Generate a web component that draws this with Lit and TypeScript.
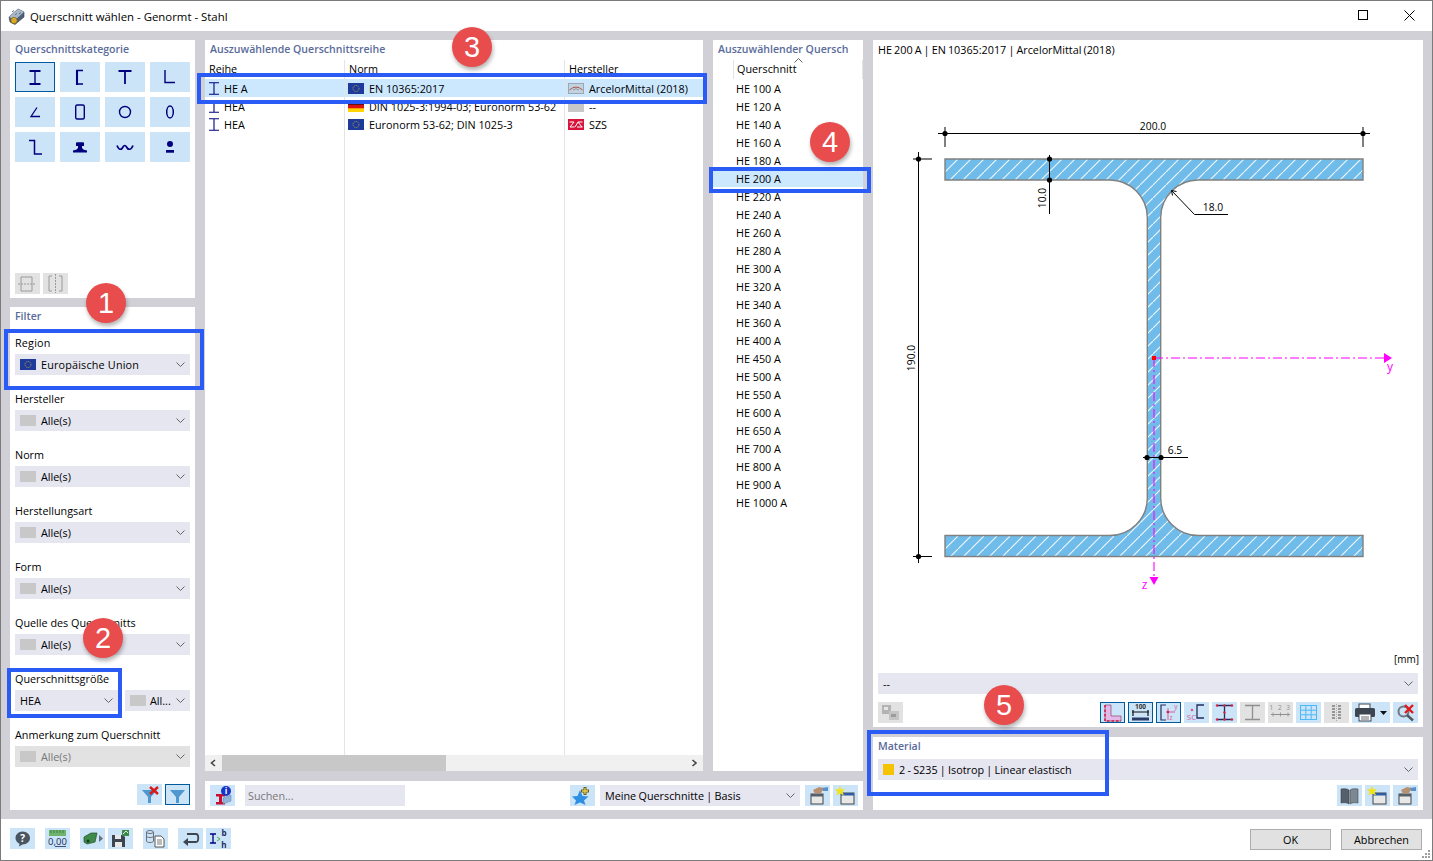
import { LitElement, html, css, svg } from "lit";
import { customElement } from "lit/decorators.js";

const NAVY = "#00007f";
const eu = svg`<rect width="16" height="11" fill="#1e3a9a"/><g fill="none" stroke="#b9a545" stroke-width="1" stroke-dasharray="1 1"><circle cx="8" cy="5.5" r="3"/></g>`;
const de = svg`<rect width="16" height="11" fill="#ffd400"/><rect width="16" height="7.3" fill="#dd1111"/><rect width="16" height="3.6" fill="#111"/>`;
const none = svg`<rect width="16" height="11" fill="#c8c8c8"/>`;
const am = svg`<rect x=".5" y=".5" width="15" height="10" fill="#c3d2e0" stroke="#9aa7b5"/><path d="M1.5 7 Q8 1 14.5 7" fill="none" stroke="#a8564a" stroke-width="1"/><path d="M5 7 Q8 4.5 11 7" fill="none" stroke="#888" stroke-width=".8"/>`;
const szs = svg`<rect width="16" height="11" fill="#d8143a"/><path d="M1.5 3 H6 L2 8 H6.5 M7 8 L10 3 M9 8 H14.5 M14.5 3 H10 L14 8" fill="none" stroke="#fff" stroke-width="1"/>`;
const flag = (c: unknown) => html`<svg class="flag" viewBox="0 0 16 11">${c}</svg>`;

const catIcons = [
  svg`<path d="M14.5 9H25.5M14.5 22H25.5" stroke-width="1.8"/><path d="M20 9V22" stroke-width="1.4"/>`,
  svg`<path d="M23 8.5H17V22H23" stroke-width="1.5"/><path d="M17 8V23" stroke-width="2.1"/>`,
  svg`<path d="M13.5 9H26.5" stroke-width="2"/><path d="M20 9V22" stroke-width="1.8"/>`,
  svg`<path d="M15 8V20.5H25" stroke-width="1.4"/>`,
  svg`<path d="M22 10.5L16 19.5H25" stroke-width="1.3"/>`,
  svg`<rect x="15.7" y="8" width="8.6" height="14" rx="1.5" stroke-width="1.4"/>`,
  svg`<circle cx="20" cy="15" r="5.5" stroke-width="1.4"/>`,
  svg`<ellipse cx="20" cy="15" rx="3.3" ry="6" stroke-width="1.5"/>`,
  svg`<path d="M14 8.5H19.5V22H27" stroke-width="1.5"/>`,
  svg`<path d="M16 10.5C18 10 22 10 24 10.5V14H22V15.5C22 17 24 18 27 18.5V20.5H13V18.5C16 18 18 17 18 15.5V14H16Z" fill="${NAVY}" stroke="none"/>`,
  svg`<path d="M12 13.5C14 18.5 16.5 18 18 15C19 13 20.5 13 21.5 15C23 18 26 18.5 28 13.5" stroke-width="1.7"/>`,
  svg`<circle cx="20" cy="12" r="3" fill="${NAVY}" stroke="none"/><rect x="16" y="18" width="8" height="2.7" fill="${NAVY}" stroke="none"/>`,
];

const ic = (c: unknown, cls = "") => html`<span class="tb ${cls}"><svg viewBox="0 0 25 21">${c}</svg></span>`;
const gl = "#8f8f8f";
const icons = {
  mirrorY: svg`<g fill="none" stroke="#9a9a9a"><path d="M6 4H17V18H6Z"/><path d="M3 11H20" stroke-dasharray="2 1"/></g>`,
  mirrorZ: svg`<g fill="none" stroke="#9a9a9a"><path d="M9 3H6V18H9M16 3H19V18H16"/><path d="M12.5 1V20" stroke-dasharray="2 1"/></g>`,
  filterX: svg`<path d="M5 6H20L14 13V19H11V13Z" fill="#4f97cf"/><path d="M13 3L21 10M21 3L13 10" stroke="#d81a1a" stroke-width="2.4"/>`,
  filter: svg`<path d="M5 6H20L14 13V19H11V13Z" fill="#4f97cf"/>`,
  help: svg`<path d="M12.5 3.5C17 3.5 20 6.5 20 10C20 13.5 17 16.5 12.5 16.5L9 18.5L9.5 15.7C7 14.5 5.5 12.5 5.5 10C5.5 6.5 8.5 3.5 12.5 3.5Z" fill="#4a5560"/><text x="12.6" y="14" text-anchor="middle" class="svt" font-size="10" font-weight="700" fill="#fff">?</text>`,
  zero: svg`<rect x="4" y="2" width="17" height="6" fill="#6fb36f"/><path d="M6 2V5M9 2V5M12 2V5M15 2V5M18 2V5" stroke="#2c6e2c" stroke-width=".7"/><text x="12.5" y="16.5" text-anchor="middle" class="svt" font-size="9.5" fill="#1a2b5c">0,00</text><path d="M10 18.5H21" stroke="#1a2b5c" stroke-width=".8"/>`,
  green: svg`<path d="M4 9L11 5H17L15 14L7 16L4 14Z" fill="#3d8a4a" stroke="#1f4d2a" stroke-width=".7"/><circle cx="8" cy="13" r="1.5" fill="#173a20"/><path d="M19 7L23 10.5L19 14Z" fill="#6a7078"/>`,
  save: svg`<path d="M4 7H15L17 9V19H4Z" fill="#3d4650"/><rect x="7" y="7" width="6" height="4" fill="#e8e8e8"/><rect x="7" y="14" width="7" height="5" fill="#e8e8e8"/><path d="M14 2H21V8H14Z" fill="#3d8a4a"/><path d="M15 6L18 3L20 5" stroke="#d8f0d8" fill="none"/>`,
  dbdoc: svg`<ellipse cx="7" cy="4" rx="3.5" ry="1.5" fill="none" stroke="#6a7078"/><path d="M3.5 4V13C3.5 15 10.5 15 10.5 13V4M3.5 8C3.5 10 10.5 10 10.5 8" fill="none" stroke="#6a7078"/><path d="M12 8H18L21 11V19H12Z" fill="#fff" stroke="#555"/><path d="M14 12H19M14 14H19M14 16H19" stroke="#555" stroke-width=".8"/>`,
  ret: svg`<path d="M9 6H18C21 6 21 14 18 14H7" fill="none" stroke="#3d4650" stroke-width="1.8"/><path d="M10 10L5 14L10 18Z" fill="#3d4650"/>`,
  ibh: svg`<path d="M4 6H10M4 15H10M7 6V15" stroke="#00007f" stroke-width="1.3" fill="none"/><path d="M11 9L14 11L11 13" stroke="#4fae4f" fill="none"/><text x="18" y="8" text-anchor="middle" class="svt" font-size="8" font-weight="700" fill="#1a2b5c">b</text><text x="18" y="19.5" text-anchor="middle" class="svt" font-size="8" font-weight="700" fill="#1a2b5c">h</text>`,
  info: svg`<path d="M6 9H15V11.5H12V17H15V19.5H6V17H9V11.5H6Z" fill="#c8102e"/><path d="M13 13L21 10V16L13 19Z" fill="#8fb3d9" stroke="#5c7fa8" stroke-width=".5"/><circle cx="16" cy="6" r="5" fill="#1733c8"/><text x="16" y="9" text-anchor="middle" class="svt" font-size="8.5" font-weight="700" fill="#fff">i</text>`,
  star: svg`<path d="M10 5L12.5 11L18.5 11.5L14 15.5L15.5 20L10 17.5L4.5 20L6 15.5L2 11.5L7.5 11Z" fill="#2f8fe3"/><path d="M15 2V10M11 6H19" stroke="#6b5a10" stroke-width="3"/><path d="M15 3V9M12 6H18" stroke="#e6cf5a" stroke-width="1.3"/>`,
  hand: svg`<rect x="6" y="9" width="12" height="10" fill="#e8e8e8" stroke="#444"/><rect x="6" y="9" width="12" height="2.5" fill="#55606c"/><path d="M8 5L14 2L19 3L16 8L10 9Z" fill="#b98f72"/><path d="M17 3L23 2V6L18 6Z" fill="#5b8fc7"/>`,
  newWin: svg`<rect x="8" y="8" width="13" height="11" fill="#e8e8e8" stroke="#444"/><rect x="8" y="8" width="13" height="2.5" fill="#2d5ca8"/><path d="M7 1L8.5 4.5L12 4L9.5 7L11 10.5L7 8.5L3.5 10.5L4.5 7L2 4L5.5 4.5Z" fill="#f2e31c"/>`,
  book: svg`<path d="M12 5C10 3.5 7 3.5 4 4V18C7 17.5 10 17.5 12 19Z" fill="#55606c" stroke="#333" stroke-width=".5"/><path d="M13 5C15 3.5 18 3.5 21 4V18C18 17.5 15 17.5 13 19Z" fill="#7d8893" stroke="#333" stroke-width=".5"/>`,
  gears: svg`<g opacity=".65"><rect x="4" y="3" width="9" height="9" fill="#9a9a9a"/><rect x="11" y="9" width="10" height="9" fill="#b5b5b5"/><rect x="6" y="5" width="4" height="3" fill="#e8e8e8"/><rect x="13" y="12" width="5" height="3" fill="#777"/></g>`,
  lsec: svg`<path d="M5 3H11V14H21V19H5Z" fill="#e6b8e8" stroke="#7a2b5a" stroke-width=".6"/><path d="M5 3V19H21" fill="none" stroke="#d02040" stroke-width="1.6" stroke-dasharray="2.5 2"/>`,
  dim: svg`<text x="12.5" y="7" text-anchor="middle" class="svt" font-size="6.5" font-weight="700" fill="#333">100</text><path d="M4 10H21M5 8V14M20 8V14" stroke="#111" stroke-width="1.2"/><rect x="4" y="15.5" width="17" height="3" fill="#2b3a66"/>`,
  axes: svg`<path d="M10 3H5V18H10" fill="none" stroke="#222c5e" stroke-width="1.2"/><path d="M10 10H19M12 6V18" fill="none" stroke="#d65aa0"/><text x="20" y="7" text-anchor="middle" class="svt" font-size="6.5" fill="#d65aa0">y</text><text x="15" y="18" text-anchor="middle" class="svt" font-size="6.5" fill="#d65aa0">z</text><circle cx="12" cy="10" r="1.2" fill="#d02040"/>`,
  sc: svg`<circle cx="8" cy="8" r="1.3" fill="#d65aa0"/><text x="7.5" y="18" text-anchor="middle" class="svt" font-size="8" fill="#d65aa0">SC</text><path d="M20 3H13V16H20" fill="none" stroke="#222c5e" stroke-width="1.3"/>`,
  idots: svg`<path d="M5 3.5H20M5 17.5H20M12.5 3.5V17.5" stroke="#222c5e" stroke-width="1.3"/><g fill="#e02040"><circle cx="5" cy="3.5" r="1.2"/><circle cx="12.5" cy="3.5" r="1.2"/><circle cx="20" cy="3.5" r="1.2"/><circle cx="5" cy="17.5" r="1.2"/><circle cx="12.5" cy="17.5" r="1.2"/><circle cx="20" cy="17.5" r="1.2"/><circle cx="12.5" cy="10.5" r="1.2"/></g>`,
  igray: svg`<path d="M5 3.5H20M5 17.5H20M12.5 3.5V17.5" stroke="${gl}" stroke-width="1.3"/>`,
  n123: svg`<text x="12.5" y="8" text-anchor="middle" class="svt" font-size="6.5" fill="${gl}" letter-spacing="1.5">1 2 3</text><path d="M3 12.5H22" stroke="${gl}"/><path d="M5 10.5V14.5M12.5 10.5V14.5M20 10.5V14.5" stroke="${gl}" stroke-width=".8"/>`,
  grid: svg`<rect x="4.5" y="3.5" width="16" height="14" fill="none" stroke="#4db8f5"/><path d="M9.8 3.5V17.5M15.2 3.5V17.5M4.5 8.2H20.5M4.5 12.8H20.5" stroke="#4db8f5"/>`,
  column: svg`<path d="M8 4H11M14 4H17M8 7H11M14 7H17M8 10H11M14 10H17M8 13H11M14 13H17M8 16H11M14 16H17" stroke="#7d7d7d" stroke-width="1.3"/><path d="M12.5 2V19" stroke="#aaa" stroke-dasharray="1 1"/>`,
  zoomX: svg`<circle cx="10.5" cy="9.5" r="5" fill="none" stroke="#6f7880" stroke-width="2"/><path d="M14 13L20 18.5" stroke="#4f5860" stroke-width="2.4"/><path d="M12 3L20 11M20 3L12 11" stroke="#e01a1a" stroke-width="2.4"/>`,
};

const printer = html`<span class="tb wide"><svg viewBox="0 0 38 21"><rect x="7" y="2" width="11" height="5" fill="#fff" stroke="#3d4650"/><rect x="3" y="6" width="20" height="9" rx="1.5" fill="#3d4650"/><rect x="7" y="12" width="12" height="7" fill="#fff" stroke="#3d4650"/><path d="M9 15H17M9 17H17" stroke="#3d4650" stroke-width=".8"/><path d="M28 9H35L31.5 13Z" fill="#111"/></svg></span>`;

const chev = html`<svg class="chev" viewBox="0 0 9 5"><path d="M.5 .5L4.5 4.5L8.5 .5" fill="none" stroke="#666" stroke-width="1"/></svg>`;

const sizes = [100, 120, 140, 160, 180, 200, 220, 240, 260, 280, 300, 320, 340, 360, 400, 450, 500, 550, 600, 650, 700, 800, 900, 1000];
const series = [
  { name: "HE A", norm: "EN 10365:2017", nf: eu, mk: "ArcelorMittal (2018)", mf: am, sel: true },
  { name: "HEA", norm: "DIN 1025-3:1994-03; Euronorm 53-62", nf: de, mk: "--", mf: none, sel: false },
  { name: "HEA", norm: "Euronorm 53-62; DIN 1025-3", nf: eu, mk: "SZS", mf: szs, sel: false },
];

const filters = ["Hersteller", "Norm", "Herstellungsart", "Form", "Quelle des Querschnitts"];
const badges = [
  { n: 1, c: "b1" }, { n: 2, c: "b2" }, { n: 3, c: "b3" }, { n: 4, c: "b4" }, { n: 5, c: "b5" },
];
const boxes = ["h1", "h2", "h3", "h4", "h5"];

const dot = (x: number, y: number) => svg`<circle cx="${x}" cy="${y}" r="2.6" fill="#000"/>`;

@customElement("app-root")
export class AppRoot extends LitElement {
  static styles = css`
    :host { display: block; position: relative; width: 1433px; height: 861px; box-sizing: border-box; border: 1px solid #7b7b7b; background: #fff; overflow: hidden;
      font-family: "Open Sans", "Noto Sans", sans-serif; font-size: 10.8px; color: #000; }
    .svt { font-family: "Open Sans", "Noto Sans", sans-serif; }
    .title { height: 30px; display: flex; align-items: center; gap: 5px; padding-left: 7px; font-size: 11.4px; }
    .title .logo { width: 17px; height: 17px; }
    .winbtns { margin-left: auto; display: flex; }
    .winbtns svg { width: 46px; height: 30px; display: block; }
    .main { height: 788px; box-sizing: border-box; background: #d0d0d6; padding: 9px; display: grid; grid-template-columns: 185px 658px 550px; gap: 10px; }
    .col { display: flex; flex-direction: column; min-height: 0; min-width: 0; }
    .panel { background: #fff; display: flex; flex-direction: column; min-height: 0; min-width: 0; }
    .head { height: 20px; line-height: 18px; color: #5a6b9b; font-weight: 600; font-size: 10.55px; white-space: nowrap; overflow: hidden; padding-left: 5px; flex: none; }
    .cat { height: 258px; box-sizing: border-box; padding-bottom: 4px; margin-bottom: 9px; }
    .catgrid { display: grid; grid-template-columns: repeat(4, 40px); grid-auto-rows: 30px; gap: 5px; padding: 2px 5px 0; }
    .catbtn { background: #cce4f7; box-sizing: border-box; }
    .catbtn.on { outline: 1px solid #005a9e; outline-offset: -1px; }
    .catbtn svg { display: block; width: 40px; height: 30px; fill: none; stroke: #00007f; }
    .catfoot { margin-top: auto; padding-left: 5px; display: flex; gap: 3px; }
    .tb { width: 25px; height: 21px; background: #cce4f7; display: block; flex: none; box-sizing: border-box; }
    .tb svg { display: block; width: 100%; height: 100%; }
    .tb.gray { background: #e2e2e2; }
    .tb.on { outline: 1.5px solid #005a9e; outline-offset: -1.5px; }
    .tb.wide { width: 38px; }
    .filter { flex: 1; padding: 0 5px 5px; }
    .filter .head { padding: 0; margin-bottom: 9px; line-height: 19px; }
    .field { height: 56px; flex: none; min-width: 0; }
    .lab { height: 18px; line-height: 14px; white-space: nowrap; }
    .sel { height: 21px; background: #e6e6f0; display: flex; align-items: center; gap: 5px; padding: 0 5px; box-sizing: border-box; white-space: nowrap; overflow: hidden; flex: none; }
    .sel.dis { background: #e2e2e2; color: #777; }
    .region { letter-spacing: .18px; }
    .flag { width: 16px; height: 11px; flex: none; display: block; }
    .chev { width: 9px; height: 5px; margin-left: auto; flex: none; display: block; }
    .twofield { display: grid; grid-template-columns: 103px 65px; column-gap: 7px; height: 56px; flex: none; }
    .twofield .sel { gap: 4px; }
    .ffoot { margin-top: auto; display: flex; justify-content: flex-end; gap: 3px; }
    .top { flex: 1; display: flex; gap: 10px; min-height: 0; margin-bottom: 10px; }
    .list { width: 498px; flex: none; }
    .tablecols { flex: 1; display: flex; min-height: 0; }
    .tc { border-right: 1px solid #e4e4e4; box-sizing: border-box; flex: none; }
    .tc.c1 { width: 140px; }
    .tc.c2 { width: 220px; }
    .tc.c3 { flex: 1; border: 0; }
    .th { height: 19px; line-height: 18px; padding-left: 4px; white-space: nowrap; }
    .td { height: 18px; display: flex; align-items: center; white-space: nowrap; overflow: hidden; padding-left: 3px; gap: 5px; }
    .c1 .td { padding-left: 4px; }
    .c1 .td svg { width: 10px; height: 13px; flex: none; }
    .td.on { background: #cce8ff; }
    .scroll { height: 16px; background: #f0f0f0; display: flex; align-items: center; flex: none; }
    .arrow { width: 17px; height: 16px; display: block; flex: none; }
    .thumb { width: 224px; height: 16px; background: #c8c8c8; }
    .scroll .arrow:last-child { margin-left: auto; }
    .names { width: 150px; flex: none; }
    .names .hrow { height: 19px; display: flex; position: relative; flex: none; }
    .names .qh { margin-left: 20px; flex: 1; border-left: 1px solid #e4e4e4; border-right: 1px solid #e4e4e4; padding-left: 3px; line-height: 18px; }
    .sorter { position: absolute; left: 81px; top: -2px; width: 9px; height: 5px; }
    .names .td { padding-left: 23px; flex: none; }
    .searchbar { height: 29px; flex: none; flex-direction: row; align-items: center; padding: 0 5px; }
    .find { width: 160px; height: 21px; background: #e6e6f0; margin-left: 10px; color: #777; line-height: 21px; padding-left: 3px; box-sizing: border-box; }
    .starb { margin-left: auto; }
    .mysel { width: 200px; margin: 0 5px; word-spacing: -.5px; }
    .searchbar .last { margin-left: 3px; }
    .preview { flex: 1; padding: 0 5px 4px; margin-bottom: 10px; }
    .ptitle { height: 20px; line-height: 19px; flex: none; white-space: nowrap; word-spacing: -.7px; }
    .drawing { display: block; width: 550px; height: 590px; margin: 0 -5px; flex: none; }
    .drawing text { font-family: "Open Sans", "Noto Sans", sans-serif; font-size: 10.3px; }
    .unit { height: 23px; line-height: 19px; text-align: right; flex: none; font-size: 10px; margin-right: -1px; }
    .ptool { display: flex; gap: 3px; margin-top: 8px; flex: none; }
    .ptool .first { margin-right: auto; }
    .material { height: 73px; flex: none; padding: 0 5px; }
    .material .head { padding: 0; height: 22px; line-height: 18px; }
    .matsel { word-spacing: -.55px; }
    .swatch { width: 11px; height: 11px; background: #f5c400; flex: none; }
    .mfoot { display: flex; justify-content: flex-end; gap: 3px; margin-top: 5px; }
    .bottom { height: 41px; box-sizing: border-box; padding: 9px 10px 0 9px; display: flex; }
    .g10 { margin-left: 10px; }
    .g3 { margin-left: 3px; }
    .btn { width: 81px; height: 21px; margin-top: 1px; background: #e1e1e1; border: 1px solid #adadad; box-sizing: border-box; text-align: center; line-height: 20px; }
    .btn.ok { margin-left: auto; margin-right: 10px; }
    .grip { position: absolute; right: 1px; bottom: 1px; width: 9px; height: 9px; }
    .hl { position: absolute; box-sizing: border-box; border: 4px solid #2a5cf5; pointer-events: none; }
    .h1 { left: 3px; top: 328px; width: 200px; height: 61px; }
    .h2 { left: 6px; top: 667px; width: 115px; height: 50px; }
    .h3 { left: 196px; top: 72px; width: 510px; height: 31px; }
    .h4 { left: 708px; top: 166px; width: 162px; height: 26px; }
    .h5 { left: 866px; top: 729px; width: 242px; height: 66px; }
    .badge { position: absolute; width: 40px; height: 40px; border-radius: 50%; background: #e84c4c; color: #fff; display: flex; align-items: center; justify-content: center;
      font-family: "Liberation Sans", Arial, sans-serif; font-size: 29px; box-shadow: 1px 3px 4px rgba(0,0,0,.3); }
    .b1 { left: 85px; top: 282px; }
    .b2 { left: 82px; top: 617px; }
    .b3 { left: 451px; top: 26px; }
    .b4 { left: 809px; top: 121px; }
    .b5 { left: 983px; top: 684px; }
  `;

  private sel(label: string) {
    return html`<div class="field"><div class="lab">${label}</div><div class="sel">${flag(none)}<span>Alle(s)</span>${chev}</div></div>`;
  }

  private drawing() {
    const beam = "M945 159H1363V180H1198.3A37.6 37.6 0 0 0 1160.7 217.6V497.9A37.6 37.6 0 0 0 1198.3 535.5H1363V556.5H945V535.5H1109.7A37.6 37.6 0 0 0 1147.3 497.9V217.6A37.6 37.6 0 0 0 1109.7 180H945Z";
    return html`<svg class="drawing" viewBox="873 60 550 590">
      <defs><pattern id="hatch" width="13" height="13" patternUnits="userSpaceOnUse" x="945" y="159">
        <rect width="13" height="13" fill="#6fbcea"/><path d="M-1 14L14 -1" stroke="#f2f9fd" stroke-width="1.1"/></pattern></defs>
      <path d="${beam}" fill="url(#hatch)" stroke="#808080" stroke-width="1.4"/>
      <g stroke="#000" stroke-width="1" fill="none">
        <path d="M938 133.5H1370M945 127V147M1363 127V147"/>
        <path d="M918.5 152V563M913 159H932M913 556.5H932"/>
        <path d="M1049.5 155V214"/>
        <path d="M1171.5 190.5L1194.5 214.5H1228"/>
        <path d="M1171.5 190.5l1 5M1171.5 190.5l5 1"/>
        <path d="M1143 457.5H1188"/>
      </g>
      ${dot(945, 133.5)}${dot(1363, 133.5)}${dot(918.5, 159)}${dot(918.5, 556.5)}
      ${dot(1049.5, 159)}${dot(1049.5, 180)}${dot(1147, 457.5)}${dot(1161, 457.5)}
      <g fill="#000">
        <text x="1153" y="130" text-anchor="middle">200.0</text>
        <text x="1213" y="211" text-anchor="middle">18.0</text>
        <text x="1175" y="454" text-anchor="middle">6.5</text>
        <text transform="translate(1046 198) rotate(-90)" text-anchor="middle">10.0</text>
        <text transform="translate(915 358) rotate(-90)" text-anchor="middle">190.0</text>
      </g>
      <g stroke="#ff00ff" stroke-width="1.1" fill="none" stroke-dasharray="9 3 2 3">
        <path d="M1154 358H1385"/><path d="M1154 358V577"/>
      </g>
      <path d="M1384 353L1392 358L1384 363Z" fill="#ff00ff"/>
      <path d="M1149.5 577H1158.5L1154 585Z" fill="#ff00ff"/>
      <rect x="1152" y="356" width="4" height="4" fill="#ff0000"/>
      <g fill="#ff00ff"><text x="1390" y="371" text-anchor="middle" style="font-size:12px">y</text><text x="1144.5" y="589" text-anchor="middle" style="font-size:12px">z</text></g>
    </svg>`;
  }

  render() {
    return html`
      <div class="title">
        <svg class="logo" viewBox="0 0 17 17"><path d="M1 9L10 1L16 4L16 9L7 16.5L2 14Z" fill="#4f6178" stroke="#2e3a48" stroke-width=".6"/><path d="M10 1L16 4L7 12L1 9Z" fill="#a9b8c8"/><path d="M4 4L6 2.5M7 7L9 5.5M11 6L13 4.5" stroke="#5f7186"/><circle cx="6" cy="12.5" r="3.2" fill="#d9a92a" stroke="#6b5210" stroke-width=".6"/></svg>
        <span>Querschnitt wählen - Genormt - Stahl</span>
        <div class="winbtns">
          <svg viewBox="0 0 46 30"><rect x="18.5" y="9.5" width="9" height="9" fill="none" stroke="#000"/></svg>
          <svg viewBox="0 0 46 30"><path d="M18.5 9.5L28.5 19.5M28.5 9.5L18.5 19.5" stroke="#000" fill="none"/></svg>
        </div>
      </div>

      <div class="main">
        <div class="col">
          <div class="panel cat">
            <div class="head">Querschnittskategorie</div>
            <div class="catgrid">
              ${catIcons.map((c, i) => html`<div class="catbtn ${i === 0 ? "on" : ""}"><svg viewBox="0 0 40 30">${c}</svg></div>`)}
            </div>
            <div class="catfoot">${ic(icons.mirrorY, "gray")}${ic(icons.mirrorZ, "gray")}</div>
          </div>
          <div class="panel filter">
            <div class="head">Filter</div>
            <div class="field"><div class="lab region">Region</div><div class="sel region">${flag(eu)}<span>Europäische Union</span>${chev}</div></div>
            ${filters.map((f) => this.sel(f))}
            <div class="twofield">
              <div><div class="lab">Querschnittsgröße</div><div class="sel"><span>HEA</span>${chev}</div></div>
              <div><div class="lab"></div><div class="sel">${flag(none)}<span>All...</span>${chev}</div></div>
            </div>
            <div class="field"><div class="lab">Anmerkung zum Querschnitt</div><div class="sel dis">${flag(none)}<span>Alle(s)</span>${chev}</div></div>
            <div class="ffoot">${ic(icons.filterX)}${ic(icons.filter, "on")}</div>
          </div>
        </div>

        <div class="col">
          <div class="top">
            <div class="panel list">
              <div class="head">Auszuwählende Querschnittsreihe</div>
              <div class="tablecols">
                <div class="tc c1"><div class="th">Reihe</div>
                  ${series.map((s) => html`<div class="td ${s.sel ? "on" : ""}"><svg viewBox="0 0 10 13"><path d="M0 .7H10M0 12.3H10M5 .7V12.3" stroke="${NAVY}" stroke-width="1.1" fill="none"/></svg><span>${s.name}</span></div>`)}
                </div>
                <div class="tc c2"><div class="th">Norm</div>
                  ${series.map((s) => html`<div class="td ${s.sel ? "on" : ""}">${flag(s.nf)}<span>${s.norm}</span></div>`)}
                </div>
                <div class="tc c3"><div class="th">Hersteller</div>
                  ${series.map((s) => html`<div class="td ${s.sel ? "on" : ""}">${flag(s.mf)}<span>${s.mk}</span></div>`)}
                </div>
              </div>
              <div class="scroll">
                <svg class="arrow" viewBox="0 0 17 16"><path d="M10 5L6.5 8L10 11" fill="none" stroke="#444" stroke-width="1.6"/></svg>
                <div class="thumb"></div>
                <svg class="arrow" viewBox="0 0 17 16"><path d="M6.5 5L10 8L6.5 11" fill="none" stroke="#444" stroke-width="1.6"/></svg>
              </div>
            </div>
            <div class="panel names">
              <div class="head">Auszuwählender Quersch</div>
              <div class="hrow"><div class="qh">Querschnitt</div><svg class="sorter" viewBox="0 0 9 5"><path d="M.5 4.5L4.5 .5L8.5 4.5" fill="none" stroke="#666"/></svg></div>
              ${sizes.map((s) => html`<div class="td ${s === 200 ? "on" : ""}">HE ${s} A</div>`)}
            </div>
          </div>
          <div class="panel searchbar">
            ${ic(icons.info)}
            <div class="find">Suchen...</div>
            <div class="starb">${ic(icons.star)}</div>
            <div class="sel mysel"><span>Meine Querschnitte | Basis</span>${chev}</div>
            ${ic(icons.hand)}
            ${ic(icons.newWin, "last")}
          </div>
        </div>

        <div class="col">
          <div class="panel preview">
            <div class="ptitle">HE 200 A | EN 10365:2017 | ArcelorMittal (2018)</div>
            ${this.drawing()}
            <div class="unit">[mm]</div>
            <div class="sel"><span>--</span>${chev}</div>
            <div class="ptool">
              ${ic(icons.gears, "gray first")}
              ${ic(icons.lsec, "on")}${ic(icons.dim, "on")}${ic(icons.axes, "on")}
              ${ic(icons.sc)}${ic(icons.idots)}${ic(icons.igray, "gray")}${ic(icons.n123, "gray")}
              ${ic(icons.grid)}${ic(icons.column, "gray")}${printer}${ic(icons.zoomX)}
            </div>
          </div>
          <div class="panel material">
            <div class="head">Material</div>
            <div class="sel matsel"><span class="swatch"></span><span>2 - S235 | Isotrop | Linear elastisch</span>${chev}</div>
            <div class="mfoot">${ic(icons.book)}${ic(icons.newWin)}${ic(icons.hand)}</div>
          </div>
        </div>
      </div>

      <div class="bottom">
        ${ic(icons.help)}
        <span class="g10">${ic(icons.zero)}</span>
        <span class="g10">${ic(icons.green)}</span>
        <span class="g3">${ic(icons.save)}</span>
        <span class="g10">${ic(icons.dbdoc)}</span>
        <span class="g10">${ic(icons.ret)}</span>
        <span class="g3">${ic(icons.ibh)}</span>
        <div class="btn ok">OK</div>
        <div class="btn">Abbrechen</div>
      </div>
      <svg class="grip" viewBox="0 0 9 9"><g fill="#a0a0a0"><rect x="6" y="0" width="2" height="2"/><rect x="3" y="3" width="2" height="2"/><rect x="6" y="3" width="2" height="2"/><rect x="0" y="6" width="2" height="2"/><rect x="3" y="6" width="2" height="2"/><rect x="6" y="6" width="2" height="2"/></g></svg>

      ${boxes.map((b) => html`<div class="hl ${b}"></div>`)}
      ${badges.map((b) => html`<div class="badge ${b.c}">${b.n}</div>`)}
    `;
  }
}
